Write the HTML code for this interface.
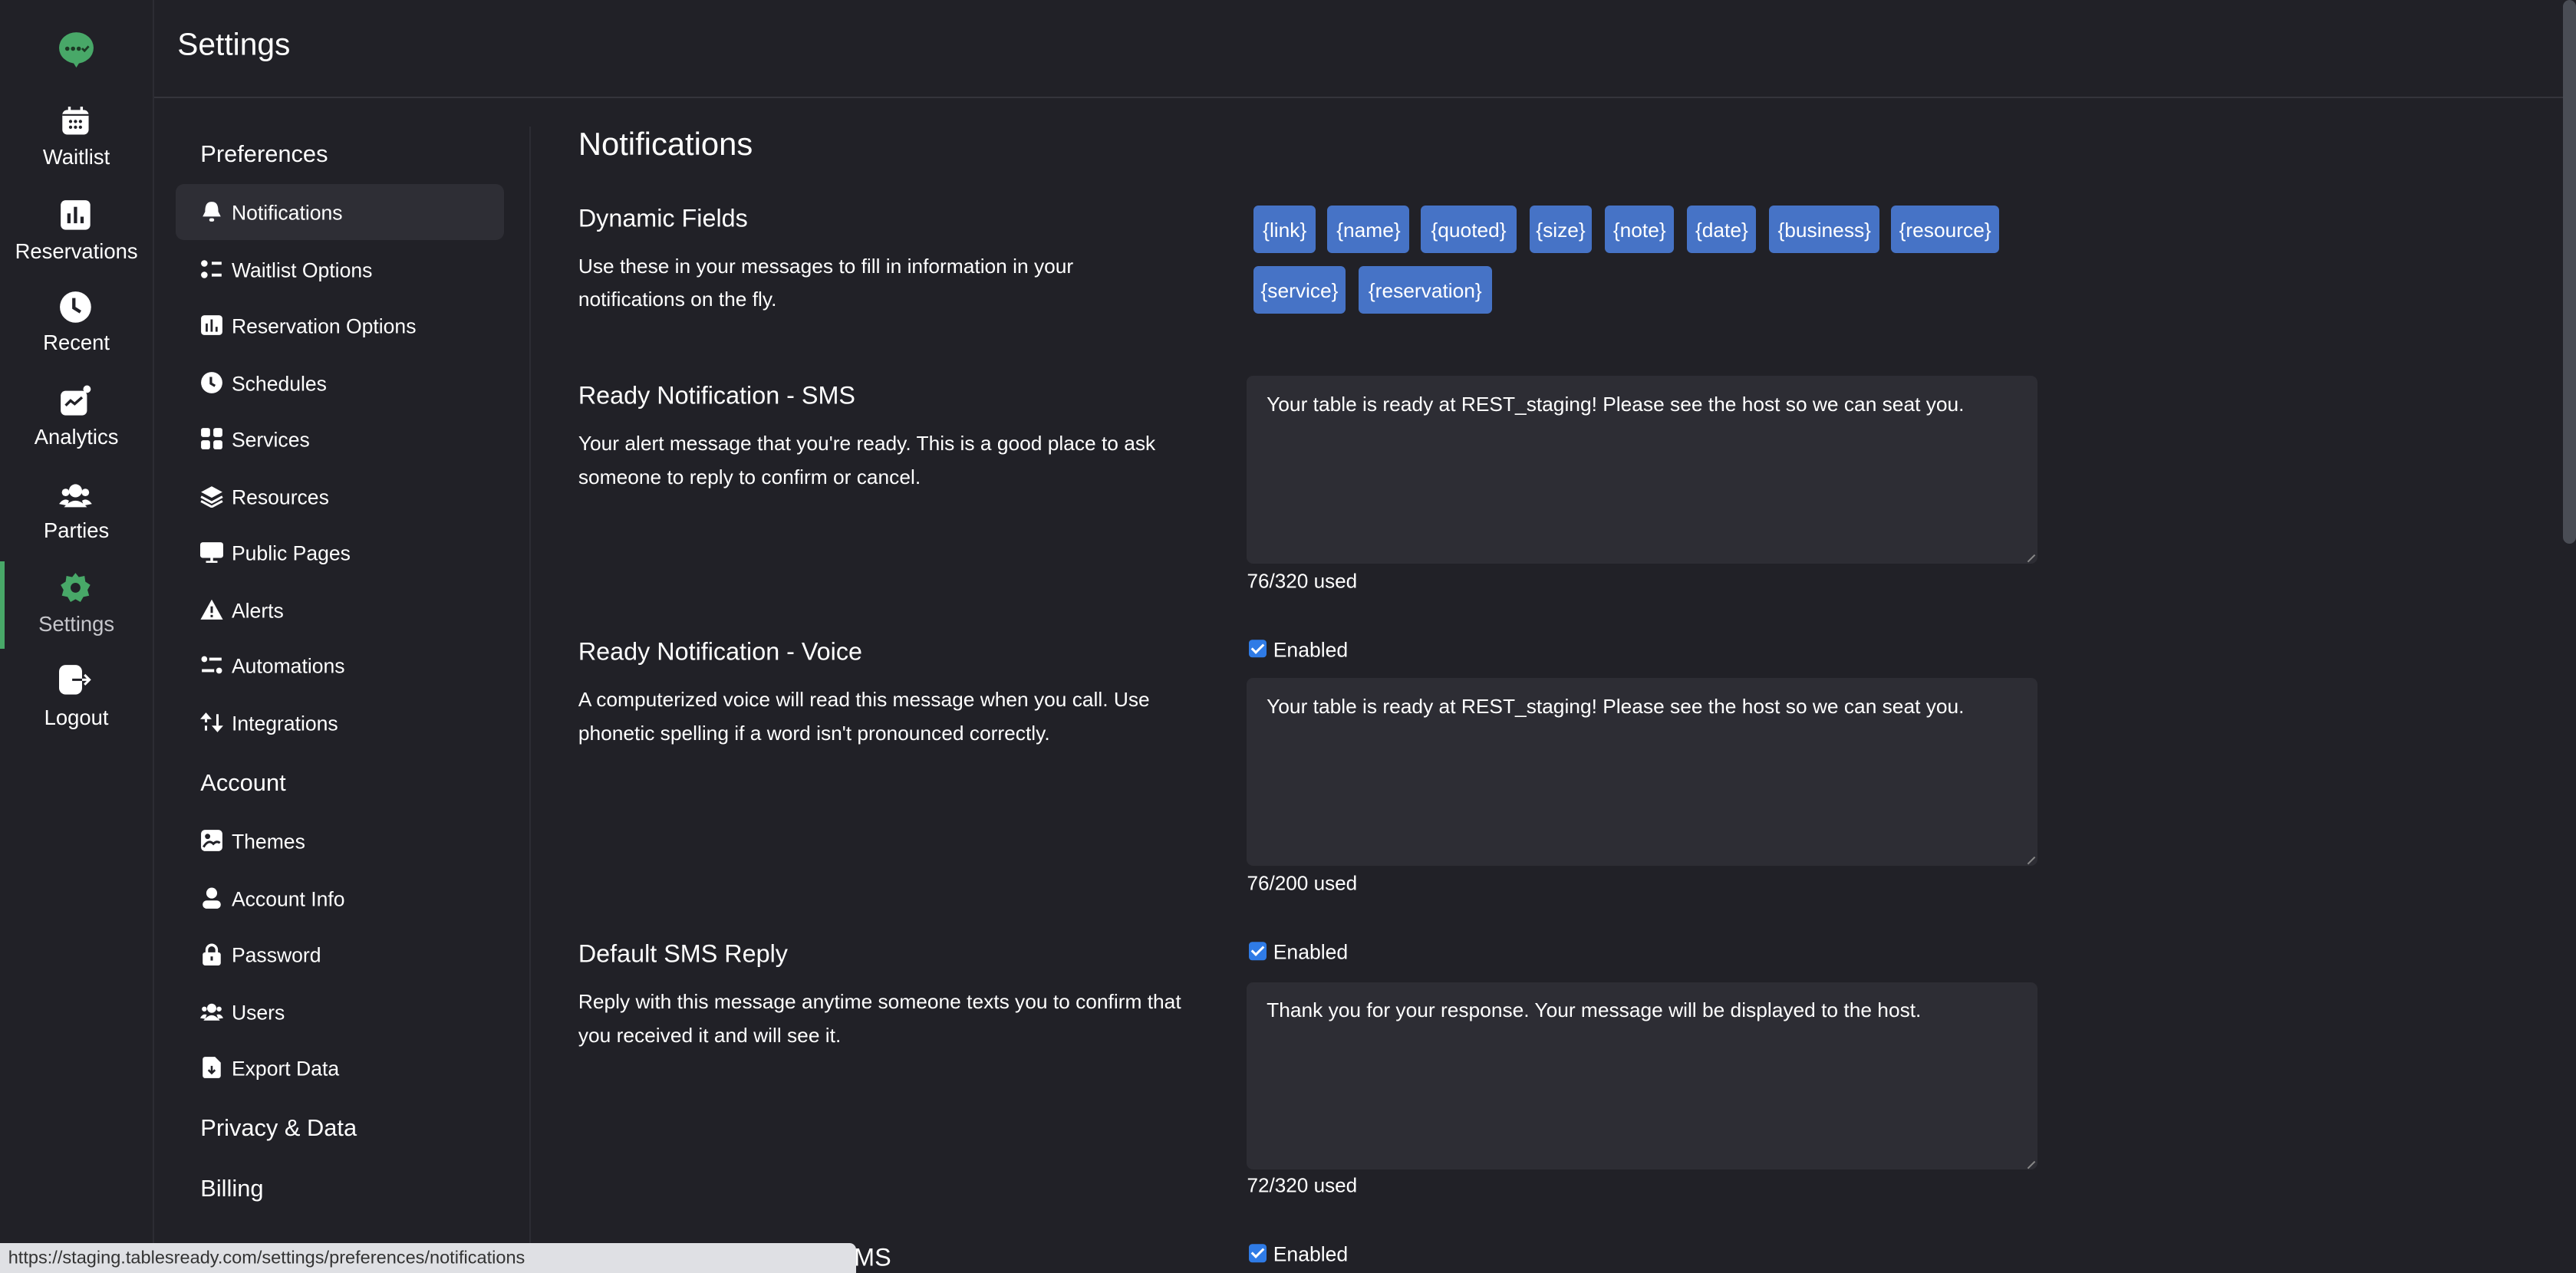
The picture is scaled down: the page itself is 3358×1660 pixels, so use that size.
<!DOCTYPE html>
<html><head><meta charset="utf-8">
<style>
html,body{margin:0;padding:0;background:#212127;overflow:hidden;width:3358px;height:1660px}
#z{zoom:2.14158;width:1568px;height:775px;position:relative;font-family:"Liberation Sans",sans-serif;color:#fff;overflow:hidden;background:#212127}
.a{position:absolute;white-space:nowrap}
.c{transform:translateY(calc(-50% + 1px))}
.nl{position:absolute;left:0;width:93px;text-align:center;font-size:12.8px;transform:translateY(calc(-50% + 1px))}
.ni{position:absolute;left:36px;width:20px;height:20px}
.mi{position:absolute;left:122px;width:14px;height:14px;transform:translateY(-50%)}
.mt{position:absolute;left:141px;font-size:12.4px;transform:translateY(calc(-50% + 1px))}
.mh{position:absolute;left:122px;font-size:14.4px;transform:translateY(calc(-50% + 1px))}
.h{position:absolute;left:352px;font-size:15.1px;transform:translateY(calc(-50% + 1px))}
.d{position:absolute;left:352px;font-size:12.3px;line-height:20.5px;white-space:nowrap;margin-top:1px}
.tag{position:absolute;height:29px;line-height:30px;background:#4673c6;border-radius:3px;font-size:12.3px;text-align:center}
.ta{position:absolute;left:759px;width:481px;height:114px;background:#2d2d34;border-radius:4px}
.ta span{position:absolute;left:12px;top:10px;font-size:12.3px}
.ta i{position:absolute;right:2px;bottom:2px;width:6px;height:6px;border-right:1px solid #888;transform:rotate(45deg);}
.u{position:absolute;left:759px;font-size:12.2px;transform:translateY(calc(-50% + 1px))}
.cb{position:absolute;left:760px;width:11px;height:11px;background:#2f7be6;border-radius:2px;transform:translateY(-50%)}
.cb:after{content:"";position:absolute;left:3.5px;top:1px;width:3px;height:6px;border:solid #fff;border-width:0 1.6px 1.6px 0;transform:rotate(45deg)}
.en{position:absolute;left:775px;font-size:12.4px;transform:translateY(calc(-50% + 1px))}
</style></head><body><div id="z">
<div class="a" style="left:93px;top:0;width:1px;height:775px;background:#2c2c33"></div>
<div class="a" style="left:94px;top:59px;width:1466px;height:1px;background:#34343b"></div>
<div class="a" style="left:322px;top:77px;width:1px;height:698px;background:#2c2c33"></div>
<div class="a" style="left:1560px;top:0;width:8px;height:331px;background:#4a4d55;border-radius:4px"></div>
<svg class="a" style="left:36px;top:19px" width="21" height="22" viewBox="0 0 21 22"><ellipse cx="10.5" cy="10" rx="10.5" ry="9.5" fill="#48a868"/><path d="M8 18 L10.5 22 L13 18Z" fill="#48a868"/><circle cx="5" cy="10.5" r="1.3" fill="#1c3a25"/><circle cx="8.5" cy="10.5" r="1.3" fill="#1c3a25"/><circle cx="12" cy="10.5" r="1.3" fill="#1c3a25"/><path d="M14 10.3 L15.5 11.8 L18 9" stroke="#1c3a25" stroke-width="1.3" fill="none"/></svg>

<svg class="ni" style="top:64px" viewBox="0 0 20 20"><rect x="2" y="3" width="16" height="15" rx="3" fill="#fff"/><rect x="5.5" y="1" width="1.6" height="4" fill="#fff"/><rect x="12.9" y="1" width="1.6" height="4" fill="#fff"/><rect x="2" y="5.5" width="16" height="1" fill="#212127"/><g fill="#212127"><circle cx="7" cy="10" r="1"/><circle cx="10" cy="10" r="1"/><circle cx="13" cy="10" r="1"/><circle cx="7" cy="13.5" r="1"/><circle cx="10" cy="13.5" r="1"/><circle cx="13" cy="13.5" r="1"/></g></svg>
<div class="nl" style="top:95px">Waitlist</div>
<svg class="ni" style="top:121px" viewBox="0 0 20 20"><rect x="1" y="1" width="18" height="18" rx="3" fill="#fff"/><g fill="#212127"><rect x="5" y="9" width="2" height="6"/><rect x="9" y="5" width="2" height="10"/><rect x="13" y="11" width="2" height="4"/></g></svg>
<div class="nl" style="top:152px">Reservations</div>
<svg class="ni" style="top:177px" viewBox="0 0 20 20"><circle cx="10" cy="10" r="9.5" fill="#fff"/><path d="M9 4.5V10.5L13 13" stroke="#212127" stroke-width="2" fill="none"/></svg>
<div class="nl" style="top:208px">Recent</div>
<svg class="ni" style="top:234px" viewBox="0 0 20 20"><rect x="1" y="4" width="16" height="15" rx="3" fill="#fff"/><circle cx="17" cy="3" r="2.3" fill="#fff"/><path d="M4 13 L7 10 L9.5 12 L14 8" stroke="#212127" stroke-width="1.6" fill="none"/></svg>
<div class="nl" style="top:265px">Analytics</div>
<svg class="ni" style="top:292px" viewBox="0 0 20 20"><circle cx="10" cy="7" r="4" fill="#fff"/><path d="M3 17 Q10 9 17 17 Z" fill="#fff"/><circle cx="4" cy="8" r="2.3" fill="#fff"/><circle cx="16" cy="8" r="2.3" fill="#fff"/><path d="M0 15 Q3 11 6 13 L5 16Z M20 15 Q17 11 14 13 L15 16Z" fill="#fff"/></svg>
<div class="nl" style="top:322px">Parties</div>
<div class="a" style="left:0;top:342px;width:3px;height:53px;background:#48a868"></div>
<svg class="ni" style="top:348px" viewBox="0 0 20 20"><path d="M10 1 L12 3.5 L15.5 2.8 L16 6.3 L19 8.3 L17.3 11.3 L18.3 14.8 L14.8 15.6 L13 18.7 L10 17 L7 18.7 L5.2 15.6 L1.7 14.8 L2.7 11.3 L1 8.3 L4 6.3 L4.5 2.8 L8 3.5Z" fill="#48a868"/><circle cx="10" cy="10" r="3" fill="#212127"/></svg>
<div class="nl" style="top:379px;color:#c6c6cb">Settings</div>
<svg class="ni" style="top:404px" viewBox="0 0 20 20"><rect x="0" y="1" width="14" height="18" rx="4" fill="#fff"/><path d="M8 10 H18.5 M15.5 7 L18.5 10 L15.5 13" stroke="#fff" stroke-width="1.4" fill="none"/><path d="M8 10 H14" stroke="#212127" stroke-width="1.4"/></svg>
<div class="nl" style="top:436px">Logout</div>

<div class="a c" style="left:108px;top:26px;font-size:19px">Settings</div>

<div class="mh" style="top:93px">Preferences</div>
<div class="a" style="left:107px;top:112px;width:200px;height:34px;background:#2e2e35;border-radius:5px"></div>
<svg class="mi" style="top:129px" viewBox="0 0 14 14"><path d="M7 1 C3.5 1 3 4 3 7 L1.5 10 H12.5 L11 7 C11 4 10.5 1 7 1Z" fill="#fff"/><rect x="5.5" y="11" width="3" height="2" rx="1" fill="#fff"/></svg>
<div class="mt" style="top:129px">Notifications</div>
<svg class="mi" style="top:164px" viewBox="0 0 14 14"><circle cx="2.5" cy="3.5" r="2" fill="#fff"/><circle cx="2.5" cy="10.5" r="2" fill="#fff"/><rect x="7" y="2.5" width="6" height="1.8" fill="#fff"/><rect x="7" y="9.7" width="6" height="1.8" fill="#fff"/></svg>
<div class="mt" style="top:164px">Waitlist Options</div>
<svg class="mi" style="top:198px" viewBox="0 0 14 14"><rect x="0.5" y="1" width="13" height="12" rx="2" fill="#fff"/><g fill="#212127"><rect x="3.3" y="6" width="1.3" height="5"/><rect x="6.3" y="3.5" width="1.3" height="7.5"/><rect x="9.3" y="8" width="1.3" height="3"/></g></svg>
<div class="mt" style="top:198px">Reservation Options</div>
<svg class="mi" style="top:233px" viewBox="0 0 14 14"><circle cx="7" cy="7" r="6.5" fill="#fff"/><path d="M6.5 3.5V7.5L9 9" stroke="#212127" stroke-width="1.5" fill="none"/></svg>
<div class="mt" style="top:233px">Schedules</div>
<svg class="mi" style="top:267px" viewBox="0 0 14 14"><g fill="#fff"><rect x="0.5" y="0.5" width="5.5" height="5.5" rx="1.3"/><rect x="8" y="0.5" width="5.5" height="5.5" rx="1.3"/><rect x="0.5" y="8" width="5.5" height="5.5" rx="1.3"/><rect x="8" y="8" width="5.5" height="5.5" rx="1.3"/></g></svg>
<div class="mt" style="top:267px">Services</div>
<svg class="mi" style="top:302px" viewBox="0 0 14 14"><path d="M7 1 L13.5 4.5 L7 8 L0.5 4.5Z" fill="#fff"/><path d="M0.5 7.3 L7 10.8 L13.5 7.3 M0.5 10 L7 13.5 L13.5 10" stroke="#fff" stroke-width="1.4" fill="none"/></svg>
<div class="mt" style="top:302px">Resources</div>
<svg class="mi" style="top:336px" viewBox="0 0 14 14"><rect x="0" y="1" width="14" height="9.5" rx="1.5" fill="#fff"/><rect x="6.2" y="10" width="1.6" height="2.5" fill="#fff"/><rect x="3.5" y="12.3" width="7" height="1.2" fill="#fff"/></svg>
<div class="mt" style="top:336px">Public Pages</div>
<svg class="mi" style="top:371px" viewBox="0 0 14 14"><path d="M7 0.8 L13.8 13 H0.2Z" fill="#fff"/><rect x="6.3" y="5" width="1.4" height="4" fill="#212127"/><rect x="6.3" y="10.2" width="1.4" height="1.4" fill="#212127"/></svg>
<div class="mt" style="top:371px">Alerts</div>
<svg class="mi" style="top:405px" viewBox="0 0 14 14"><circle cx="2.5" cy="3.5" r="1.8" fill="#fff"/><rect x="5.5" y="2.6" width="7.5" height="1.8" fill="#fff"/><circle cx="11.5" cy="10.5" r="1.8" fill="#fff"/><rect x="1" y="9.6" width="7.5" height="1.8" fill="#fff"/></svg>
<div class="mt" style="top:405px">Automations</div>
<svg class="mi" style="top:440px" viewBox="0 0 14 14"><path d="M3.5 1 L7 5 H0Z" fill="#fff"/><rect x="2.8" y="5" width="1.4" height="2" fill="#fff"/><rect x="2.8" y="9" width="1.4" height="3" fill="#fff"/><path d="M10.5 13 L14 9 H7Z" fill="#fff"/><rect x="9.8" y="2" width="1.4" height="7" fill="#fff"/></svg>
<div class="mt" style="top:440px">Integrations</div>

<div class="mh" style="top:476px">Account</div>
<svg class="mi" style="top:512px" viewBox="0 0 14 14"><rect x="0.5" y="0.5" width="13" height="13" rx="2.5" fill="#fff"/><circle cx="4.5" cy="4.5" r="1.6" fill="#212127"/><path d="M2 11 Q5 6 8 9 Q10 7 12 8.5" stroke="#212127" stroke-width="1.4" fill="none"/></svg>
<div class="mt" style="top:512px">Themes</div>
<svg class="mi" style="top:547px" viewBox="0 0 14 14"><circle cx="7" cy="4" r="3.3" fill="#fff"/><rect x="1.5" y="8.5" width="11" height="5" rx="2.5" fill="#fff"/></svg>
<div class="mt" style="top:547px">Account Info</div>
<svg class="mi" style="top:581px" viewBox="0 0 14 14"><path d="M4 6.5 V4.5 A3 3 0 0 1 10 4.5 V6.5" stroke="#fff" stroke-width="1.6" fill="none"/><rect x="1.5" y="6" width="11" height="8" rx="1.5" fill="#fff"/><rect x="6.3" y="8.5" width="1.4" height="2.5" fill="#212127"/></svg>
<div class="mt" style="top:581px">Password</div>
<svg class="mi" style="top:616px" viewBox="0 0 14 14"><circle cx="7" cy="5" r="2.8" fill="#fff"/><path d="M2 12.5 Q7 6 12 12.5Z" fill="#fff"/><circle cx="2.5" cy="5.5" r="1.5" fill="#fff"/><circle cx="11.5" cy="5.5" r="1.5" fill="#fff"/><path d="M0 11 Q1.5 8 4 9 L3 11.5Z M14 11 Q12.5 8 10 9 L11 11.5Z" fill="#fff"/></svg>
<div class="mt" style="top:616px">Users</div>
<svg class="mi" style="top:650px" viewBox="0 0 14 14"><path d="M3 0.5 H9 L12.5 4 V12 A1.5 1.5 0 0 1 11 13.5 H3 A1.5 1.5 0 0 1 1.5 12 V2 A1.5 1.5 0 0 1 3 0.5Z" fill="#fff"/><path d="M7 6 V10.5 M5 8.5 L7 10.5 L9 8.5" stroke="#212127" stroke-width="1.2" fill="none"/></svg>
<div class="mt" style="top:650px">Export Data</div>
<div class="mh" style="top:686px">Privacy &amp; Data</div>
<div class="mh" style="top:723px">Billing</div>

<div class="a c" style="left:352px;top:87px;font-size:19.5px">Notifications</div>

<div class="h" style="top:132px">Dynamic Fields</div>
<div class="d" style="top:151px">Use these in your messages to fill in information in your<br>notifications on the fly.</div>
<div class="tag" style="left:763px;top:125px;width:38px">{link}</div>
<div class="tag" style="left:808px;top:125px;width:50px">{name}</div>
<div class="tag" style="left:865px;top:125px;width:58px">{quoted}</div>
<div class="tag" style="left:931px;top:125px;width:38px">{size}</div>
<div class="tag" style="left:977px;top:125px;width:42px">{note}</div>
<div class="tag" style="left:1027px;top:125px;width:42px">{date}</div>
<div class="tag" style="left:1077px;top:125px;width:67px">{business}</div>
<div class="tag" style="left:1151px;top:125px;width:66px">{resource}</div>
<div class="tag" style="left:763px;top:162px;width:56px">{service}</div>
<div class="tag" style="left:827px;top:162px;width:81px">{reservation}</div>

<div class="h" style="top:240px">Ready Notification - SMS</div>
<div class="d" style="top:259px">Your alert message that you're ready. This is a good place to ask<br>someone to reply to confirm or cancel.</div>
<div class="ta" style="top:229px"><span>Your table is ready at REST_staging! Please see the host so we can seat you.</span><i></i></div>
<div class="u" style="top:353px">76/320 used</div>

<div class="h" style="top:396px">Ready Notification - Voice</div>
<div class="d" style="top:415px">A computerized voice will read this message when you call. Use<br>phonetic spelling if a word isn't pronounced correctly.</div>
<div class="cb" style="top:395px"></div><div class="en" style="top:395px">Enabled</div>
<div class="ta" style="top:413px"><span>Your table is ready at REST_staging! Please see the host so we can seat you.</span><i></i></div>
<div class="u" style="top:537px">76/200 used</div>

<div class="h" style="top:580px">Default SMS Reply</div>
<div class="d" style="top:599px">Reply with this message anytime someone texts you to confirm that<br>you received it and will see it.</div>
<div class="cb" style="top:579px"></div><div class="en" style="top:579px">Enabled</div>
<div class="ta" style="top:598px"><span>Thank you for your response. Your message will be displayed to the host.</span><i></i></div>
<div class="u" style="top:721px">72/320 used</div>

<div class="h" style="top:765px">Reminder Notification - SMS</div>
<div class="cb" style="top:763px"></div><div class="en" style="top:763px">Enabled</div>

<div class="a" style="left:0;top:757px;width:521px;height:18px;background:#dfe0e4;border-radius:0 4px 0 0"></div>
<div class="a c" style="left:5px;top:765px;font-size:11px;color:#333">https://staging.tablesready.com/settings/preferences/notifications</div>
</div></body></html>
